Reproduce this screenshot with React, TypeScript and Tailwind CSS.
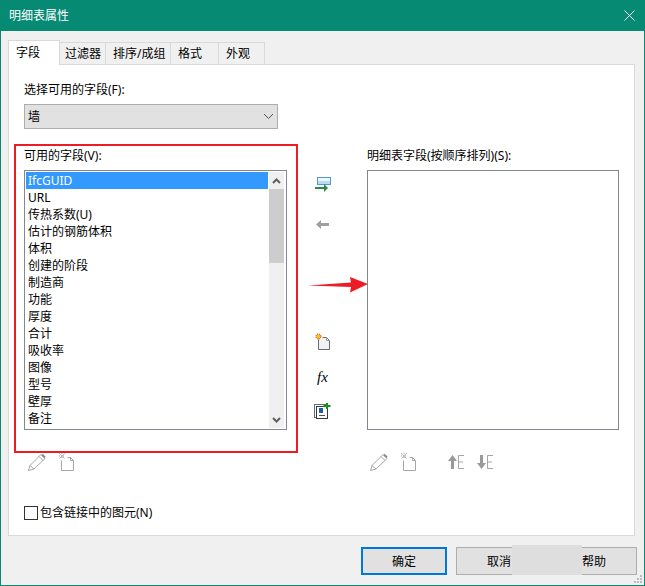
const FIELDS = ['URL', '传热系数(U)', '估计的钢筋体积', '体积', '创建的阶段', '制造商', '功能', '厚度', '合计', '吸收率', '图像', '型号', '壁厚', '备注'];

const TABS = [
  { label: '过滤器', className: 'w-[46px] pl-[5px]' },
  { label: '排序/成组', className: 'w-[65px] pl-[7px]' },
  { label: '格式', className: 'w-[48px] pl-[7px]' },
  { label: '外观', className: 'w-[46px] pl-[7px]' },
];

function Pencil() {
  return (
    <svg width="18" height="18" viewBox="0 0 18 18" fill="none" stroke="#a6a6a6">
      <path d="M0.500 17.500l1.500-5L13 1.500l4 4L6 16z" />
      <path d="M2 12.500l4 3.500M11 3.500l4 4" />
      <path d="M14 1.500l3 3" stroke="#8c8c8c" strokeWidth="2" />
    </svg>
  );
}

function DisabledPage() {
  return (
    <svg width="16" height="18" viewBox="0 0 16 18" fill="none" stroke="#a6a6a6">
      <path d="M2.500 7.500v10h12V7.500l-3-3h-3" />
      <path d="M11.500 4.500v3h3" />
      <path d="M0 0l6 6M6 0L0 6M3 0v6M0 3h6" strokeDasharray="1 1" stroke="#9a9a9a" />
    </svg>
  );
}

function SortIcon({ up }: { up: boolean }) {
  return (
    <svg width="17" height="16" viewBox="0 0 17 16">
      <path d={up ? 'M4.500 1L9 7H6v8H3V7H0z' : 'M4.500 15L9 9H6V1H3v8H0z'} fill="#9a9a9a" />
      <path d="M16 1.500h-5.500v13H16M10.500 8H15" fill="none" stroke="#a6a6a6" />
    </svg>
  );
}

function ScrollChevron({ up }: { up: boolean }) {
  return (
    <svg width="9" height="6" viewBox="0 0 9 6" fill="none" stroke="#606060" strokeWidth="2">
      <path d={up ? 'M1 5l3.500-3.500L8 5' : 'M1 1l3.500 3.500L8 1'} />
    </svg>
  );
}

function AddFieldIcon() {
  return (
    <svg width="16" height="16" viewBox="0 0 16 16">
      <rect x="2.500" y="0.500" width="13" height="7" fill="#bcdcf5" stroke="#4d9ad8" />
      <rect x="3" y="1" width="12" height="3" fill="#eef6fc" />
      <path d="M0 10h9V7l4 4-4 4v-3H0z" fill="#2e8b45" />
    </svg>
  );
}

function NewParamIcon() {
  return (
    <svg width="16" height="17" viewBox="0 0 16 17">
      <path d="M3.500 6.500v10h11v-9l-3-3h-4" fill="#f2f2f2" stroke="#666a70" />
      <path d="M11.500 4.500v3h3" fill="none" stroke="#9aa0a6" />
      <circle cx="3.500" cy="3.500" r="2.500" fill="#f7c21a" stroke="#d8281a" strokeDasharray="1 1" />
    </svg>
  );
}

function CombineIcon() {
  return (
    <svg width="17" height="16" viewBox="0 0 17 16">
      <rect x="0.500" y="1.500" width="11" height="13" fill="#fff" stroke="#6a6a6a" />
      <rect x="2.500" y="3.500" width="11" height="12" fill="#fff" stroke="#333a40" />
      <rect x="5" y="5" width="4" height="5" fill="#1f5f9e" />
      <path d="M5 12.500h6" stroke="#555" />
      <path d="M12 0h2v2h2.500v2H14v2h-2V4H9.500V2H12z" fill="#0a9a17" />
    </svg>
  );
}

function TabRow() {
  return (
    <div className="flex items-end h-[25px] ml-[7px] relative z-10 text-[12px]">
      <div className="w-[52px] h-[25px] bg-white border border-b-0 border-[#d9d9d9] pl-[7px] pt-[3px] text-[12px] text-black">字段</div>
      {TABS.map((tab) => (
        <div key={tab.label} className={`${tab.className} h-[23px] bg-[#f0f0f0] border border-l-0 border-[#d9d9d9] flex items-center text-black`}>
          {tab.label}
        </div>
      ))}
    </div>
  );
}

function AvailableList() {
  return (
    <div className="w-[263px] h-[260px] border border-[#828790] bg-white p-px flex">
      <div className="w-[242px]">
        <div className="h-[17px] bg-[#3399ff] text-white leading-[17px] pl-[2px] text-[12px]">IfcGUID</div>
        {FIELDS.map((field) => (
          <div key={field} className="h-[17px] leading-[17px] pl-[2px] text-[12px] text-black">{field}</div>
        ))}
      </div>
      <div className="w-[15px] ml-[1px] bg-[#f0f0f0] flex flex-col">
        <div className="h-[17px] flex items-center justify-center"><ScrollChevron up /></div>
        <div className="h-[74px] bg-[#cdcdcd]" />
        <div className="flex-1" />
        <div className="h-[17px] flex items-center justify-center"><ScrollChevron up={false} /></div>
      </div>
    </div>
  );
}

function LeftColumn() {
  return (
    <div className="w-[284px] flex flex-col">
      <div className="pl-[10px] pt-[16px]">
        <div className="h-[17px] leading-[17px] text-[12px] text-black">选择可用的字段(F):</div>
        <div className="mt-[6px] w-[254px] h-[25px] bg-[#e1e1e1] border border-[#adadad] flex items-center justify-between pl-[3px] pr-[3px] text-[12px] text-black">
          <span>墙</span>
          <svg width="11" height="7" viewBox="0 0 11 7" fill="none" stroke="#555">
            <path d="M1 1l4.500 4.500L10 1" />
          </svg>
        </div>
      </div>
      <div className="mt-[15px] h-[309px] border-2 border-[#ed1c24] pl-[8px] pt-[1px]">
        <div className="h-[17px] leading-[17px] text-[12px] text-black">可用的字段(V):</div>
        <div className="mt-[6px]"><AvailableList /></div>
      </div>
      <div className="pl-[14px] flex items-start gap-[13px]">
        <Pencil />
        <DisabledPage />
      </div>
      <div className="mt-[33px] pl-[10px] flex items-center h-[17px] gap-[2px] text-[12px] text-black">
        <span className="w-[14px] h-[14px] border border-[#333] bg-white" />
        <span>包含链接中的图元(N)</span>
      </div>
    </div>
  );
}

function MiddleColumn() {
  return (
    <div className="w-[69px] h-[320px] mt-[112px] flex flex-col items-center pr-[20px]">
      <AddFieldIcon />
      <div className="mt-[27px]">
        <svg width="13" height="9" viewBox="0 0 13 9">
          <path d="M0 4.500L5 0v3h8v3H5v3z" fill="#a0a0a0" />
        </svg>
      </div>
      <div className="mt-[104px]"><NewParamIcon /></div>
      <div className="mt-[18px] h-[18px] leading-[18px] text-[15px] italic text-black [font-family:'Liberation_Serif',serif]">fx</div>
      <div className="mt-[17px]"><CombineIcon /></div>
    </div>
  );
}

function RightColumn() {
  return (
    <div className="flex flex-col pt-[82px]">
      <div className="h-[17px] leading-[17px] text-[12px] text-black">明细表字段(按顺序排列)(S):</div>
      <div className="mt-[6px] w-[252px] h-[260px] border border-[#828790] bg-white" />
      <div className="mt-[23px] flex items-center">
        <div className="ml-[3px]"><Pencil /></div>
        <div className="ml-[13px]"><DisabledPage /></div>
        <div className="ml-[31px]"><SortIcon up /></div>
        <div className="ml-[12px]"><SortIcon up={false} /></div>
      </div>
    </div>
  );
}

export default function App() {
  return (
    <div className="relative w-[645px] h-[586px] overflow-hidden bg-[#f0f0f0] border-x border-b border-[#068a74] [font-family:'Noto_Sans','Noto_Sans_CJK_SC',sans-serif]">
      <div className="h-[31px] -mx-px bg-[#068a74] text-white text-[12px] flex items-center justify-between pl-[9px] pr-[10px]">
        <span>明细表属性</span>
        <svg width="11" height="11" viewBox="0 0 11 11" fill="none" stroke="#fff">
          <path d="M0.500 0.500l10 10M10.500 0.500l-10 10" />
        </svg>
      </div>

      <div className="pt-[9px]">
        <TabRow />
        <div className="-mt-px ml-[7px] w-[627px] h-[472px] bg-white border border-[#d9d9d9] flex pl-[5px]">
          <LeftColumn />
          <MiddleColumn />
          <RightColumn />
        </div>
      </div>

      <div className="mt-[11px] flex pl-[360px] gap-[9px] text-[12px] text-black">
        <div className="w-[86px] h-[28px] bg-[#e1e1e1] border-2 border-[#0078d7] flex items-center justify-center pt-[1px]">确定</div>
        <div className="w-[86px] h-[28px] bg-[#e1e1e1] border border-[#adadad] flex items-center justify-center pt-[1px]">取消</div>
        <div className="w-[86px] h-[28px] bg-[#e1e1e1] border border-[#adadad] flex items-center justify-center pt-[1px]">帮助</div>
      </div>

      {/* gray patch painted over the buttons */}
      <div className="absolute left-[511px] top-[545px] w-[70px] h-[30px] bg-[#dedede]" />

      {/* resize grip */}
      <svg className="absolute right-0 bottom-0" width="11" height="11" viewBox="0 0 11 11" fill="#bdbdbd">
        <rect x="7" y="1" width="2" height="2" />
        <rect x="4" y="4" width="2" height="2" />
        <rect x="7" y="4" width="2" height="2" />
        <rect x="1" y="7" width="2" height="2" />
        <rect x="4" y="7" width="2" height="2" />
        <rect x="7" y="7" width="2" height="2" />
      </svg>

      {/* red annotation arrow */}
      <svg className="absolute left-[307px] top-[275px]" width="60" height="20" viewBox="0 0 60 20">
        <path d="M0 10.500L43 7.500 42 2 60 9 42 17.500 43 12z" fill="#ed1c24" />
      </svg>
    </div>
  );
}
